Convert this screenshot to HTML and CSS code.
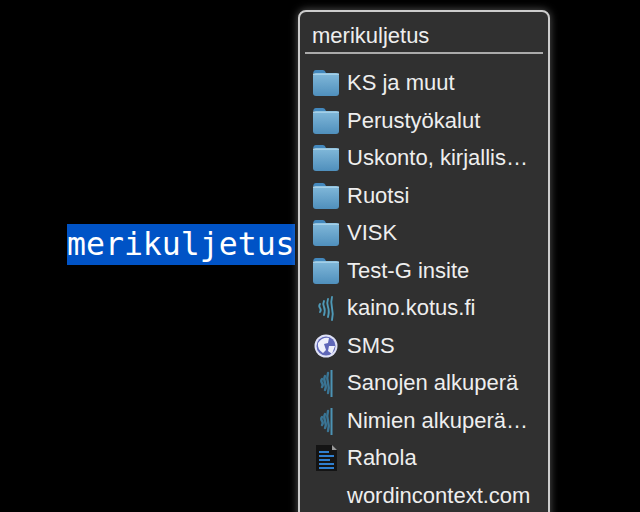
FILE: index.html
```html
<!DOCTYPE html>
<html lang="en">
<head>
    <meta charset="UTF-8">
    <title>Context menu</title>
    <link rel="stylesheet" href="styles.css">
</head>
<body>
    <svg width="0" height="0" class="defs">
        <defs>
            <linearGradient id="folder-front" x1="0" y1="0" x2="0" y2="1">
                <stop offset="0" stop-color="#82b9da"/>
                <stop offset="1" stop-color="#4f8fbc"/>
            </linearGradient>
            <symbol id="folder" viewBox="0 0 28 26">
                <path d="M1 5q0-5 3-5h7q2 0 3 3h-13z" fill="#4388bd"/>
                <rect x="1" y="3" width="26" height="23" rx="3" fill="url(#folder-front)"/>
                <rect x="1" y="3.500" width="26" height="1.500" fill="#a3cfe8"/>
            </symbol>
            <symbol id="waves" viewBox="0 0 28 28">
                <g fill="none" stroke="#4f9ab8" stroke-width="1.900" stroke-linecap="round">
                    <path d="M8 10q-1.500 2 0 4t0 4"/>
                    <path d="M12 7q-1.500 3 0 6t0 8"/>
                    <path d="M16 5q-1.500 4 0 8t0 10"/>
                    <path d="M20 3q-1.500 5 0 11t0 12"/>
                </g>
            </symbol>
            <symbol id="waves-soft" viewBox="0 0 28 28">
                <g fill="none" stroke="#3a7595" stroke-width="2.400" stroke-linecap="round">
                    <path d="M10 10q-1.500 2 0 4t0 4"/>
                    <path d="M13 7q-1.500 3 0 7t0 7"/>
                    <path d="M16 4q-1.500 5 0 10t0 10"/>
                </g>
                <path d="M19.500 1v27" stroke="#4c93b4" stroke-width="2"/>
            </symbol>
            <symbol id="globe" viewBox="0 0 28 28">
                <circle cx="14" cy="14" r="11.500" fill="#dfe2f7"/>
                <circle cx="14" cy="14" r="9.500" fill="#5f67b8"/>
                <path d="M6 11q4-6 11-5l-1 5-4 1 2 6-3 3q-6-4-5-10zM17 14l6 0-3 8-4-3z" fill="#eef0fb"/>
            </symbol>
            <symbol id="doc" viewBox="0 0 28 28">
                <path d="M4 1h16l5 5v21h-21z" fill="#141414"/>
                <path d="M20 1l5 5h-5z" fill="#9a9a9a"/>
                <path d="M7 7h10v2h-10zM7 11h15v2h-15zM7 15h11v2h-11zM7 19h15v2h-15zM7 23h15v2h-15z" fill="#2f7fd0"/>
            </symbol>
        </defs>
    </svg>

    <div class="canvas">
        <span class="selected-word">merikuljetus</span>

        <div class="menu">
            <div class="menu-title">merikuljetus</div>
            <ul class="menu-list">
                <li class="menu-item"><svg class="icon"><use href="#folder"/></svg><span class="label">KS ja muut</span></li>
                <li class="menu-item"><svg class="icon"><use href="#folder"/></svg><span class="label">Perustyökalut</span></li>
                <li class="menu-item"><svg class="icon"><use href="#folder"/></svg><span class="label">Uskonto, kirjallis…</span></li>
                <li class="menu-item"><svg class="icon"><use href="#folder"/></svg><span class="label">Ruotsi</span></li>
                <li class="menu-item"><svg class="icon"><use href="#folder"/></svg><span class="label">VISK</span></li>
                <li class="menu-item"><svg class="icon"><use href="#folder"/></svg><span class="label">Test-G insite</span></li>
                <li class="menu-item"><svg class="icon"><use href="#waves"/></svg><span class="label">kaino.kotus.fi</span></li>
                <li class="menu-item"><svg class="icon"><use href="#globe"/></svg><span class="label">SMS</span></li>
                <li class="menu-item"><svg class="icon"><use href="#waves-soft"/></svg><span class="label">Sanojen alkuperä</span></li>
                <li class="menu-item"><svg class="icon"><use href="#waves-soft"/></svg><span class="label">Nimien alkuperä…</span></li>
                <li class="menu-item"><svg class="icon"><use href="#doc"/></svg><span class="label">Rahola</span></li>
                <li class="menu-item"><span class="icon"></span><span class="label">wordincontext.com</span></li>
            </ul>
        </div>
    </div>
</body>
</html>
```

FILE: styles.css
```css
html, body {
    margin: 0;
    height: 100%;
    background: #000;
    overflow: hidden;
}
.defs {position: absolute;}
.canvas {
    position: relative;
    width: 640px;
    height: 512px;
}
.selected-word {
    position: absolute;
    left: 67px;
    top: 224px;
    height: 41px;
    line-height: 41px;
    background: #0053c6;
    color: #fff;
    font-family: "DejaVu Sans Mono", monospace;
    font-size: 31.5px;
}
.menu {
    position: absolute;
    left: 298px;
    top: 10px;
    width: 238px;
    height: 520px;
    padding: 0 5px;
    background: #303030;
    border: 2px solid #ccc;
    border-radius: 8px;
    box-shadow: 0 0 8px rgba(255, 255, 255, 0.35);
    color: #eee;
    font-family: "Liberation Sans", Arial, sans-serif;
    font-size: 22px;
}
.menu-title {
    padding: 11px 0 0 7px;
    height: 29px;
    line-height: 25px;
    border-bottom: 2px solid #aaa;
}
.menu-list {
    list-style: none;
    margin: 0;
    padding: 10.5px 0 0 0;
}
.menu-item {
    display: flex;
    align-items: center;
    gap: 7px;
    height: 37.5px;
    padding-left: 7px;
}
.icon {
    width: 28px;
    height: 28px;
    flex: none;
    filter: blur(0.6px);
}
.label {
    white-space: nowrap;
}
```
